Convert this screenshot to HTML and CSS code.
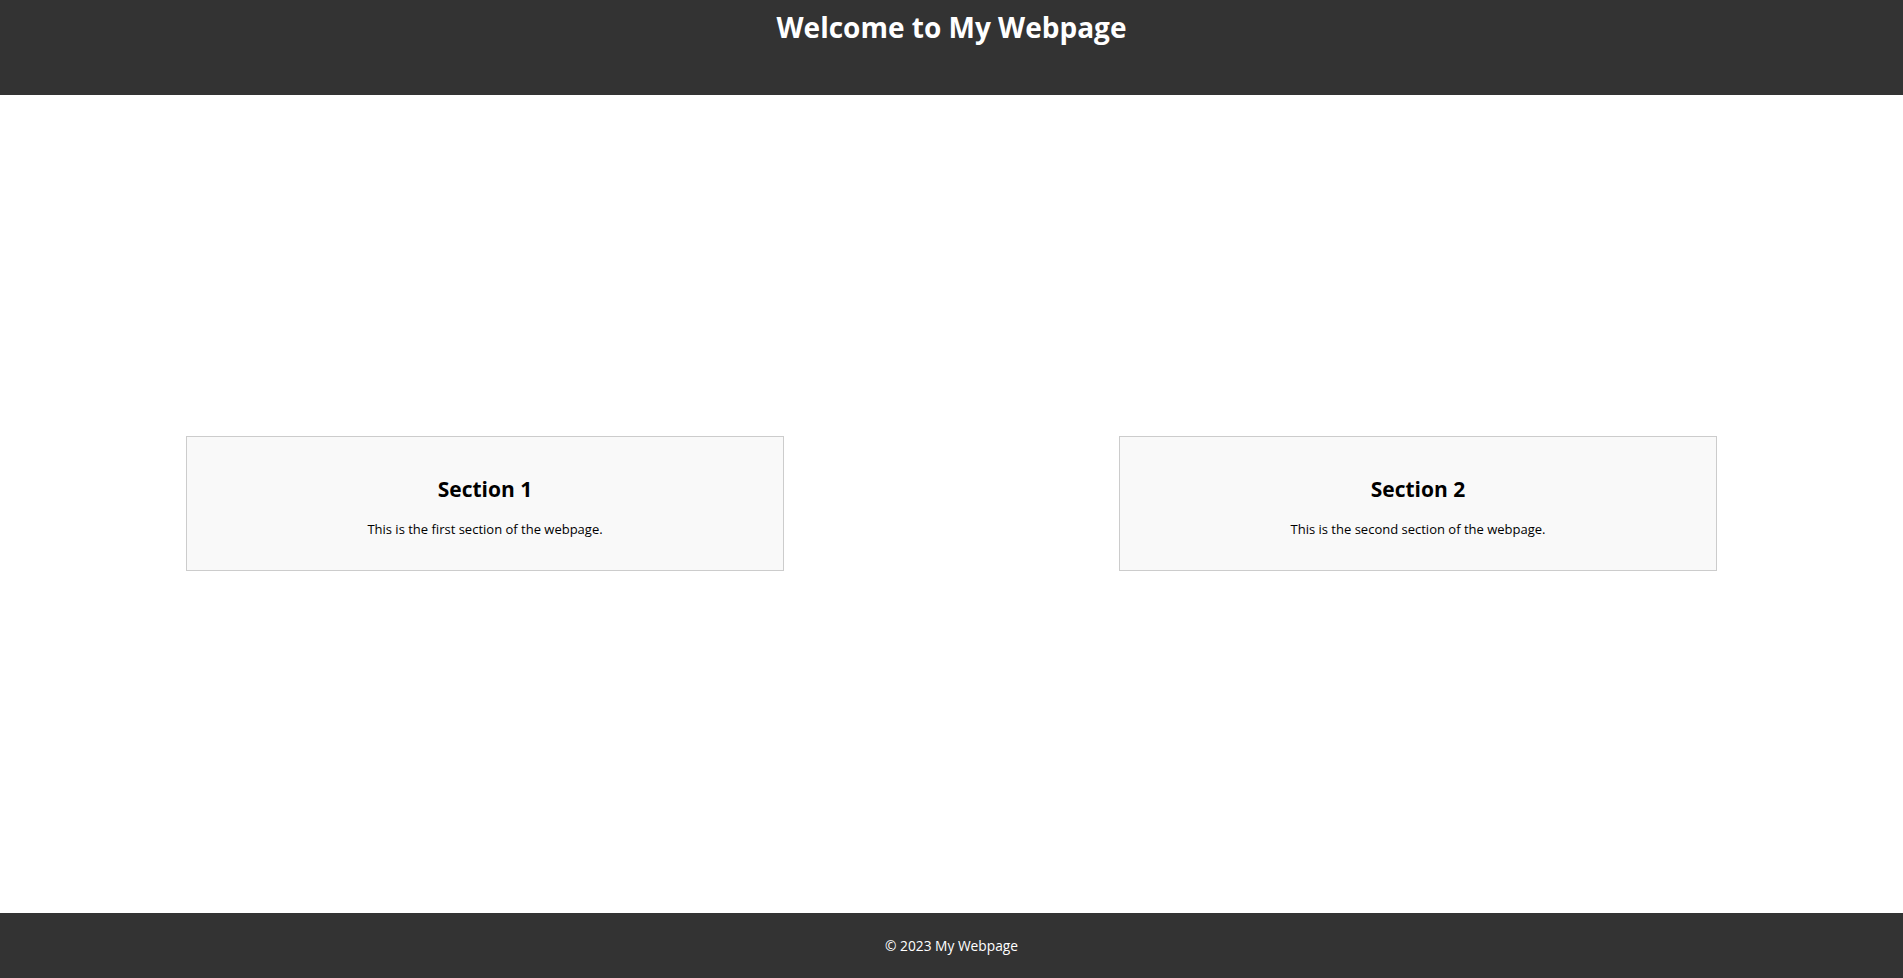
FILE: index.html
```html
<!DOCTYPE html>
<html lang="en">
<head>
<meta charset="utf-8">
<title>My Webpage</title>
<link rel="stylesheet" href="styles.css">
</head>
<body>
<header class="site-header">
  <h1 class="site-title">Welcome to My Webpage</h1>
</header>
<main class="content">
  <section class="card">
    <h2 class="card-title">Section 1</h2>
    <p class="card-text">This is the first section of the webpage.</p>
  </section>
  <section class="card">
    <h2 class="card-title">Section 2</h2>
    <p class="card-text">This is the second section of the webpage.</p>
  </section>
</main>
<footer class="site-footer">
  <p class="footer-text">&copy; 2023 My Webpage</p>
</footer>
</body>
</html>
```
FILE: styles.css
```css
* { box-sizing: border-box; }
html, body { height: 100%; }
body {
  margin: 0;
  min-height: 100vh;
  display: flex;
  flex-direction: column;
  font-family: "Open Sans", "Noto Sans", sans-serif;
  color: #000;
  background: #fff;
}
.site-header {
  background: #333;
  color: #fff;
  height: 95px;
  padding-top: 7px;
  text-align: center;
  flex: none;
}
.site-title {
  margin: 0;
  font-size: 28px;
  font-weight: 700;
  line-height: 40px;
}
.content {
  flex: 1;
  display: flex;
  justify-content: center;
  align-items: center;
  gap: 335px;
  padding-bottom: 2px;
}
.card {
  width: 598px;
  height: 135px;
  background: #f9f9f9;
  border: 1px solid #ccc;
  padding: 20px;
  text-align: center;
}
.card-title {
  margin: 18px 0 0;
  font-size: 21px;
  font-weight: 700;
  line-height: 28px;
}
.card-text {
  margin: 17px 0 0;
  font-size: 13px;
  line-height: 18px;
}
.site-footer {
  background: #333;
  color: #fff;
  height: 65px;
  flex: none;
  display: flex;
  align-items: center;
  justify-content: center;
}
.footer-text {
  margin: 0;
  font-size: 13.75px;
}
```
